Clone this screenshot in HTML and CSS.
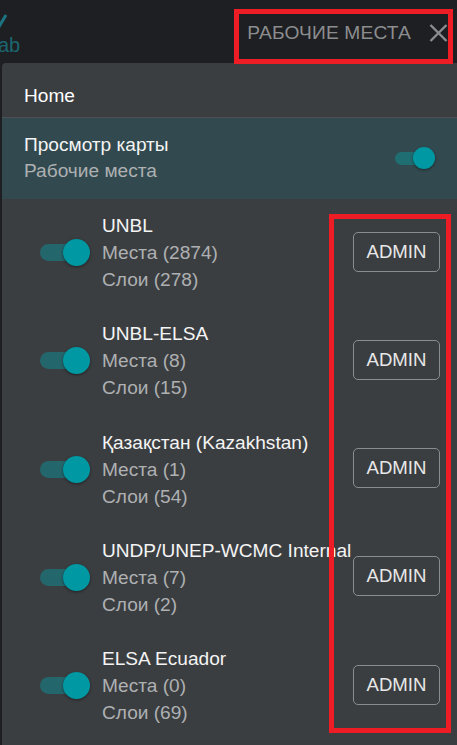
FILE: index.html
```html
<!DOCTYPE html>
<html lang="ru">
<head>
<meta charset="utf-8">
<title>Рабочие места</title>
<link rel="stylesheet" href="styles.css">
</head>
<body>
<div class="app">
  <header class="topbar">
    <div class="logo">
      <svg class="logo-mark" width="10" height="18" viewBox="0 0 10 18"><path d="M-2 16 L7 1" stroke="#1b7480" stroke-width="3" fill="none"/></svg>
      <span class="logo-text">ab</span>
    </div>
    <div class="top-right">
      <span class="top-title">РАБОЧИЕ МЕСТА</span>
      <svg class="close" width="19" height="18" viewBox="0 0 19 18"><path d="M1.5 1 L17.5 17 M17.5 1 L1.5 17" stroke="#8c8d8f" stroke-width="2.4" fill="none"/></svg>
    </div>
  </header>

  <section class="panel">
    <div class="home-row">Home</div>
    <div class="map-row">
      <div class="map-text">
        <div class="t-main">Просмотр карты</div>
        <div class="t-sub">Рабочие места</div>
      </div>
      <span class="switch small"><span class="track"></span><span class="knob"></span></span>
    </div>

    <div class="ws-list">
      <div class="ws-item">
        <span class="switch"><span class="track"></span><span class="knob"></span></span>
        <div class="info">
          <div class="t-main">UNBL</div>
          <div class="t-sub">Места (2874)</div>
          <div class="t-sub">Слои (278)</div>
        </div>
        <button class="admin">ADMIN</button>
      </div>
      <div class="ws-item">
        <span class="switch"><span class="track"></span><span class="knob"></span></span>
        <div class="info">
          <div class="t-main">UNBL-ELSA</div>
          <div class="t-sub">Места (8)</div>
          <div class="t-sub">Слои (15)</div>
        </div>
        <button class="admin">ADMIN</button>
      </div>
      <div class="ws-item">
        <span class="switch"><span class="track"></span><span class="knob"></span></span>
        <div class="info">
          <div class="t-main">Қазақстан (Kazakhstan)</div>
          <div class="t-sub">Места (1)</div>
          <div class="t-sub">Слои (54)</div>
        </div>
        <button class="admin">ADMIN</button>
      </div>
      <div class="ws-item">
        <span class="switch"><span class="track"></span><span class="knob"></span></span>
        <div class="info">
          <div class="t-main">UNDP/UNEP-WCMC Internal</div>
          <div class="t-sub">Места (7)</div>
          <div class="t-sub">Слои (2)</div>
        </div>
        <button class="admin">ADMIN</button>
      </div>
      <div class="ws-item">
        <span class="switch"><span class="track"></span><span class="knob"></span></span>
        <div class="info">
          <div class="t-main">ELSA Ecuador</div>
          <div class="t-sub">Места (0)</div>
          <div class="t-sub">Слои (69)</div>
        </div>
        <button class="admin">ADMIN</button>
      </div>
    </div>
  </section>

  <div class="mark mark-title"></div>
  <div class="mark mark-admin"></div>
</div>
</body>
</html>
```

FILE: styles.css
```css
html, body {
  margin: 0;
  padding: 0;
  background: #1e1f22;
}

.app {
  position: relative;
  width: 457px;
  height: 745px;
  overflow: hidden;
  font-family: "Liberation Sans", Arial, sans-serif;
  font-size: 19.1px;
  background: #1e1f22;
}

.topbar {
  height: 63px;
  display: flex;
  justify-content: space-between;
  align-items: stretch;
}

.logo {
  display: flex;
  flex-direction: column;
  margin-left: -1px;
  padding-top: 14px;
  width: 20px;
}

.logo-mark {
  display: block;
}

.logo-text {
  color: #1b6670;
  font-size: 20px;
  line-height: 20px;
  margin-left: -1px;
  margin-top: 3px;
}

.top-right {
  display: flex;
  align-items: center;
  gap: 18px;
  padding-right: 9px;
  padding-top: 3px;
}

.top-title {
  color: #8c8d8f;
  font-size: 19.2px;
  letter-spacing: 0.15px;
  line-height: 22px;
}

.close {
  display: block;
}

.panel {
  margin-left: 2px;
  height: 682px;
  background: #3b3e41;
  border-radius: 4px 0 0 0;
  padding-top: 9px;
  box-sizing: border-box;
}

.home-row {
  color: #ffffff;
  line-height: 27px;
  padding: 10px 22px 8px;
  border-bottom: 1px solid #4c5053;
}

.map-row {
  display: flex;
  align-items: center;
  justify-content: space-between;
  background: #324a4f;
  padding: 14px 22px 15px 22px;
}

.map-text {
  line-height: 26px;
}

.t-main {
  color: #f4f4f4;
  white-space: nowrap;
}

.t-sub {
  color: #aeb0b2;
  white-space: nowrap;
}

.switch {
  position: relative;
  display: block;
  flex: none;
  width: 50px;
  height: 27px;
}

.switch .track {
  position: absolute;
  left: 0;
  top: 5px;
  width: 43px;
  height: 17px;
  border-radius: 9px;
  background: #23676c;
}

.switch .knob {
  position: absolute;
  right: 0;
  top: 0;
  width: 27px;
  height: 27px;
  border-radius: 50%;
  background: #0098a2;
  box-shadow: 0 1px 3px rgba(0, 0, 0, 0.45);
}

.switch.small {
  width: 40px;
  height: 22px;
}

.switch.small .track {
  top: 4.5px;
  width: 34px;
  height: 13px;
  border-radius: 7px;
  background: #1f6e72;
}

.switch.small .knob {
  width: 22px;
  height: 22px;
}

.ws-item {
  display: flex;
  align-items: center;
  padding: 13px 17px 14.25px 38px;
  line-height: 27px;
}

.ws-item .switch {
  margin-right: 12px;
}

.info {
  flex: 1;
  min-width: 0;
}

.admin {
  flex: none;
  width: 87px;
  height: 40px;
  box-sizing: border-box;
  border: 1px solid #8a8c8f;
  border-radius: 5px;
  background: transparent;
  color: #e8e8e8;
  font-family: "Liberation Sans", Arial, sans-serif;
  font-size: 18.6px;
  padding: 0;
  margin-top: -2px;
}

.mark {
  position: absolute;
  border: 5px solid #ee1c25;
  box-sizing: border-box;
  pointer-events: none;
}

.mark-title {
  left: 234px;
  top: 9px;
  width: 219px;
  height: 55px;
}

.mark-admin {
  left: 329px;
  top: 214px;
  width: 122px;
  height: 519px;
}
```
